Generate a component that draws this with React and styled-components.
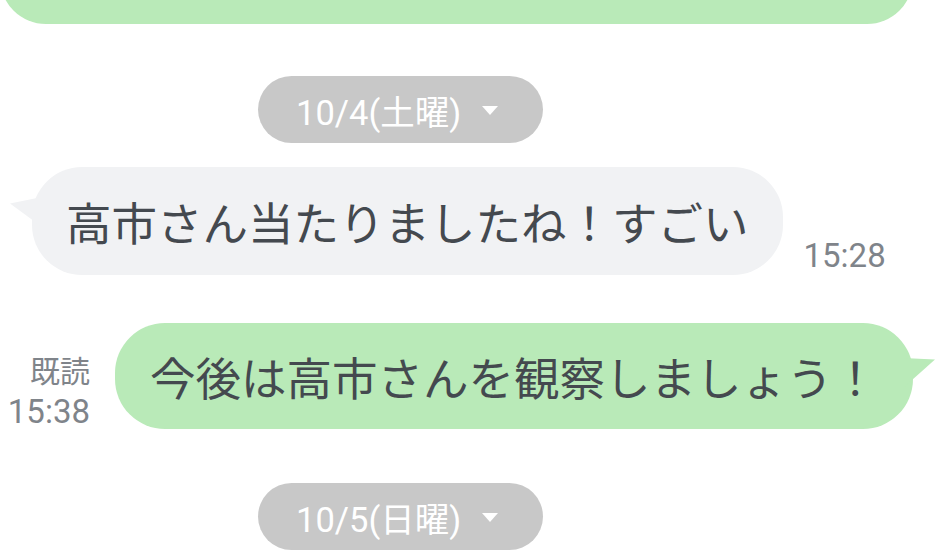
import React from "react";
import styled, { createGlobalStyle } from "styled-components";

const Global = createGlobalStyle`
  html, body { margin: 0; padding: 0; background: #ffffff; }
  body { overflow: hidden; font-family: Roboto, "Noto Sans CJK JP", sans-serif; }
`;

const Screen = styled.div`
  width: 940px;
  height: 559px;
  overflow: hidden;
  display: flex;
  flex-direction: column;
  background: #ffffff;
`;

const PartialBubble = styled.div`
  width: 913px;
  height: 106px;
  margin-top: -82px;
  background: #b9eab8;
  border-radius: 46px;
  flex-shrink: 0;
`;

const DatePill = styled.div`
  align-self: flex-start;
  margin-left: 258px;
  margin-top: ${(p) => p.$top}px;
  width: 285px;
  height: 67px;
  box-sizing: border-box;
  padding-left: 38px;
  border-radius: 34px;
  background: #c8c8c8;
  color: #ffffff;
  display: flex;
  align-items: center;
  font-family: Roboto, "Noto Sans CJK JP", sans-serif;
  font-size: 34.5px;
  flex-shrink: 0;
`;

const Caret = styled.span`
  width: 0;
  height: 0;
  margin-left: 21px;
  margin-top: 2px;
  border-left: 8.5px solid transparent;
  border-right: 8.5px solid transparent;
  border-top: 9px solid #ffffff;
`;

const Row = styled.div`
  display: flex;
  align-items: flex-end;
  margin-top: ${(p) => p.$top}px;
  padding-left: ${(p) => p.$pad}px;
  flex-shrink: 0;
`;

const Bubble = styled.div`
  position: relative;
  height: ${(p) => p.$h}px;
  box-sizing: border-box;
  padding: 0 ${(p) => p.$px}px;
  display: flex;
  align-items: center;
  border-radius: 50px;
  background: ${(p) => (p.$mine ? "#b9eab8" : "#f1f2f4")};
  color: #44494f;
  font-family: "Noto Sans CJK JP", sans-serif;
  font-weight: 400;
  font-size: 45.5px;
  white-space: nowrap;

  &::before {
    content: "";
    position: absolute;
    top: ${(p) => (p.$mine ? 35 : 30)}px;
    ${(p) => (p.$mine ? "right: -22px;" : "left: -22px;")}
    width: 32px;
    height: 30px;
    background: inherit;
    clip-path: ${(p) =>
      p.$mine
        ? "polygon(0 0, 100% 5%, 0 100%)"
        : "polygon(0 22%, 100% 0, 100% 100%)"};
  }
`;

const Time = styled.div`
  font-family: Roboto, sans-serif;
  font-size: 33px;
  line-height: 33px;
  color: #7f848a;
  padding-bottom: ${(p) => p.$pb || 0}px;
  margin-left: ${(p) => p.$ml || 0}px;
`;

const Meta = styled.div`
  display: flex;
  flex-direction: column;
  align-items: flex-end;
  width: 82px;
  margin-right: 25px;
  padding-bottom: 1px;
`;

const Read = styled.div`
  font-family: "Noto Sans CJK JP", sans-serif;
  font-size: 30px;
  line-height: 30px;
  color: #7f848a;
  margin-bottom: 11px;
`;

export default function App() {
  return (
    <Screen>
      <Global />
      <PartialBubble />
      <DatePill $top={52}>
        10/4(土曜)
        <Caret />
      </DatePill>
      <Row $top={24} $pad={32}>
        <Bubble $h={108} $px={34}>
          高市さん当たりましたね！すごい
        </Bubble>
        <Time $ml={21} $pb={3}>15:28</Time>
      </Row>
      <Row $top={48} $pad={8}>
        <Meta>
          <Read>既読</Read>
          <Time>15:38</Time>
        </Meta>
        <Bubble $mine $h={106} $px={35}>
          今後は高市さんを観察しましょう！
        </Bubble>
      </Row>
      <DatePill $top={54}>
        10/5(日曜)
        <Caret />
      </DatePill>
    </Screen>
  );
}
